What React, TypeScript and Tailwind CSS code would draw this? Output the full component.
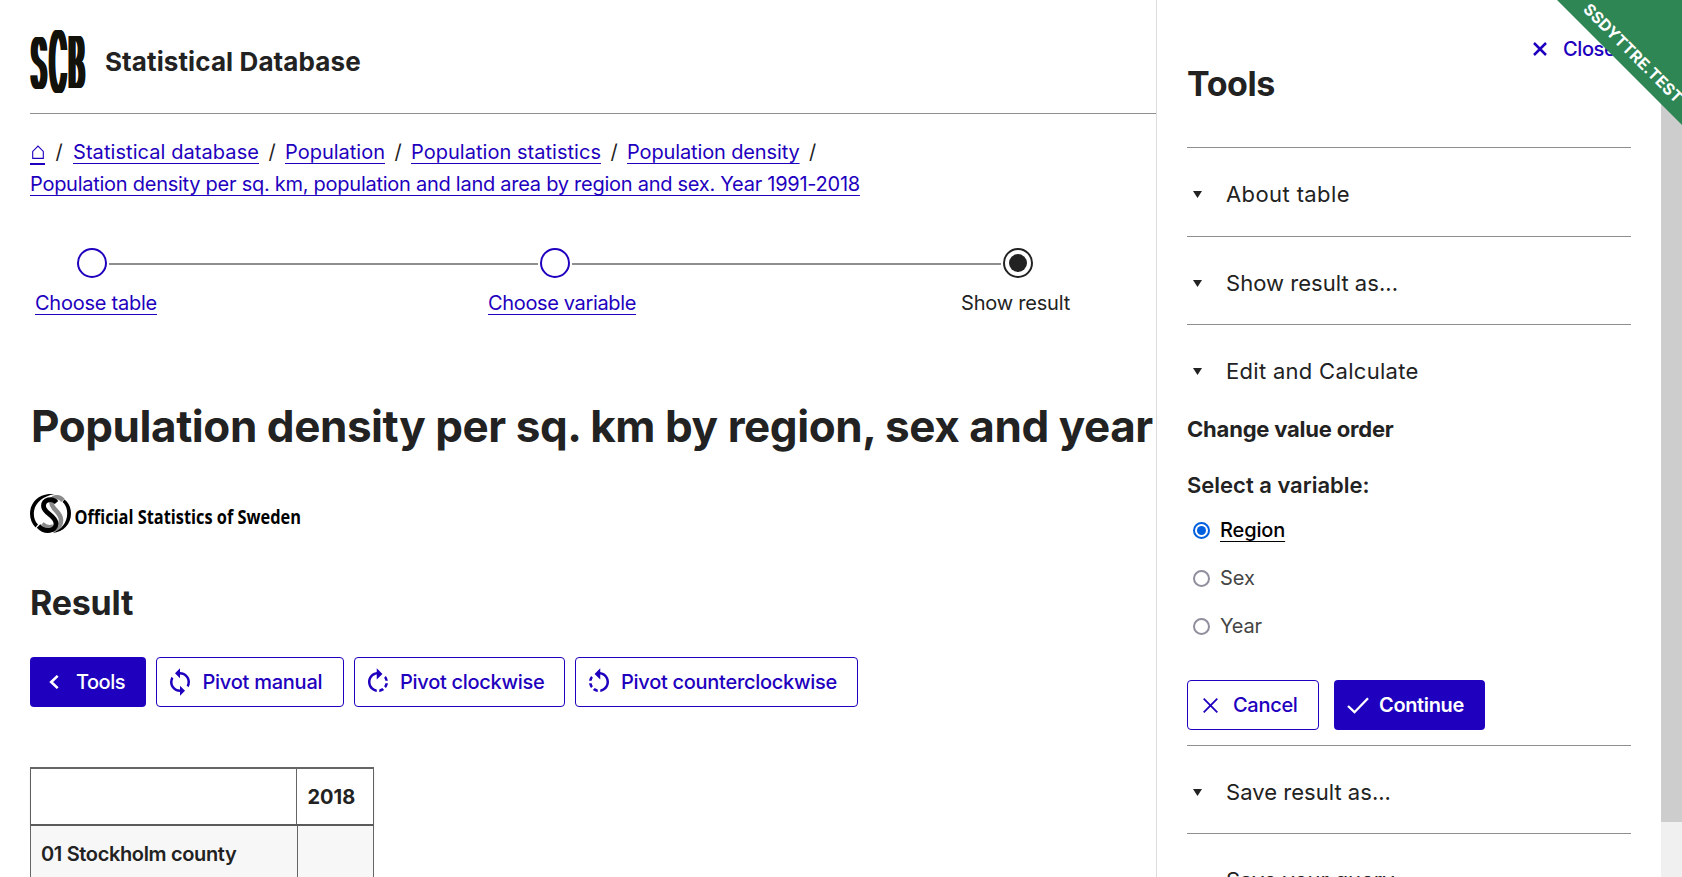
import React from "react";
import { MdSync, MdRotateRight, MdRotateLeft } from "react-icons/md";

const link = "underline decoration-1 underline-offset-[4px] text-[#1e00be]";

function ScbLogo() {
  const letter =
    "absolute left-0 top-0 block origin-top-left font-light text-[20px] leading-[24px] text-[#12120b] [text-shadow:0.7px_0,1.4px_0,2.1px_0,2.8px_0,3.5px_0,4.2px_0,4.6px_0]";
  return (
    <div className="relative h-[63px] w-[55px] shrink-0" aria-label="SCB">
      <span className={`${letter} [transform:translate(-1.2px,-8.6px)_scale(1.16,3.48)]`}>S</span>
      <span className={`${letter} [transform:translate(17.2px,-17.8px)_scale(1.12,4.2)]`}>C</span>
      <span className={`${letter} [transform:translate(36.3px,-9.6px)_scale(1.16,3.57)]`}>B</span>
    </div>
  );
}

function HomeIcon() {
  return (
    <span className="mt-[7px] flex h-[22px] w-[15px] shrink-0 justify-center border-b-2 border-[#1e00be]">
      <svg viewBox="0 0 12 15" className="mt-[2px] h-[15px] w-[12px]">
        <path d="M0.7 13.4V6.4L6 1l5.3 5.4v7z" fill="none" stroke="#1e00be" strokeWidth="1.1" />
      </svg>
    </span>
  );
}

function Slash({ className }: { className: string }) {
  return <span className={`shrink-0 text-center ${className}`}>/</span>;
}

function Circle() {
  return <div className="size-[30px] shrink-0 rounded-full border-[2.4px] border-[#1e00be] bg-white" />;
}

function StepLine() {
  return <div className="mx-[2px] mt-[2px] h-[2px] w-[429px] shrink-0 bg-[#8f8f8f]" />;
}

function OfficialStatistics() {
  return (
    <div className="flex h-[39px] items-start">
      <svg viewBox="0 0 41 39" className="h-[39px] w-[41px] shrink-0">
        <path d="M33 6.5C29 1.5 22 2.5 21.5 8.500C21 15 31 18 31 26C31 33 25 37 20 35" fill="none" stroke="#8a8a8a" strokeWidth="4.600" />
        <path d="M12.500 29.500C15 32 19 33.500 23 32" fill="none" stroke="#8a8a8a" strokeWidth="3.500" />
        <path d="M26.500 8.500C22 3.500 13.500 5.500 13.500 12C13.500 19.500 26 21.500 26 29.500C26 37.500 15 39 8.500 32" fill="none" stroke="#000" strokeWidth="4.800" />
        <path d="M24.500 0C10 -1.500 0 8 0 19.500C0 25 2 30 5.500 33.500L8 30.500C5 27.500 3.800 24 3.800 19.500C3.800 11 11 2.500 24.500 0Z" fill="#000" />
        <path d="M34.500 5.500C38.500 8.500 41 13.500 41 19.500C41 30 33.500 38 22.500 39C31.500 35.500 37.200 28.500 37.200 19.500C37.200 14.500 35.500 10.500 32.500 8Z" fill="#000" />
      </svg>
      <svg viewBox="0 0 230 39" className="ml-[3px] h-[39px] w-[230px] shrink-0 overflow-visible">
        <text
          x="0.500"
          y="29.600"
          textLength="226.500"
          lengthAdjust="spacingAndGlyphs"
          className="fill-black font-['Open_Sans',sans-serif] text-[20px] font-bold"
        >
          Official Statistics of Sweden
        </text>
      </svg>
    </div>
  );
}

function AccordionHeader({ label, className }: { label: string; className: string }) {
  return (
    <div className="flex h-[88px] shrink-0 items-center border-t border-[#8f8f8f] pt-[5px] pl-[6px]">
      <svg viewBox="0 0 9 7" className="mr-[24px] h-[7px] w-[9px]">
        <path d="M0 0h9L4.500 7z" fill="#222" />
      </svg>
      <span className={`text-[22px] leading-[28px] ${className}`}>{label}</span>
    </div>
  );
}

function Radio({ label, checked, className }: { label: string; checked?: boolean; className: string }) {
  return (
    <label className="flex h-[48px] items-center pl-[6px]">
      <span
        className={`flex size-[17px] items-center justify-center rounded-full border-2 ${
          checked ? "border-[#0060df]" : "border-[#8f8f9d]"
        }`}
      >
        {checked && <span className="size-[9px] rounded-full bg-[#0060df]" />}
      </span>
      <span className={`ml-[10px] leading-[24px] ${className}`}>{label}</span>
    </label>
  );
}

function MainContent() {
  return (
    <main className="flex h-[877px] w-[1156px] shrink-0 flex-col overflow-hidden pl-[30px]">
      <header className="flex h-[114px] shrink-0 items-start border-b border-[#8f8f8f] pt-[30px]">
        <ScbLogo />
        <div className="ml-[20px] flex h-[63px] items-center text-[26px] font-bold tracking-[0.1px]">
          Statistical Database
        </div>
      </header>

      <nav className="mt-[22px] shrink-0 leading-[32px]">
        <div className="flex">
          <HomeIcon />
          <Slash className="w-[28px]" />
          <a className={`${link} tracking-[0.07px]`}>Statistical database</a>
          <Slash className="w-[26px]" />
          <a className={link}>Population</a>
          <Slash className="w-[26px]" />
          <a className={`${link} tracking-[0.03px]`}>Population statistics</a>
          <Slash className="w-[26px]" />
          <a className={`${link} tracking-[-0.13px]`}>Population density</a>
          <Slash className="w-[26px]" />
        </div>
        <div>
          <a className={`${link} tracking-[-0.26px]`}>
            Population density per sq. km, population and land area by region and sex. Year 1991-2018
          </a>
        </div>
      </nav>

      <div className="mt-[48px] ml-[47px] flex h-[30px] shrink-0 items-center">
        <Circle />
        <StepLine />
        <Circle />
        <StepLine />
        <div className="flex size-[30px] shrink-0 items-center justify-center rounded-full border-2 border-[#222]">
          <div className="size-[18px] rounded-full bg-[#222]" />
        </div>
      </div>
      <div className="mt-[13px] flex h-[24px] shrink-0 pl-[5px] leading-[24px]">
        <div className="w-[453px]">
          <a className={`${link} tracking-[-0.24px]`}>Choose table</a>
        </div>
        <div className="w-[473px]">
          <a className={`${link} tracking-[-0.35px]`}>Choose variable</a>
        </div>
        <div className="tracking-[-0.2px]">Show result</div>
      </div>

      <h1 className="mt-[84px] h-[54px] shrink-0 pl-px text-[44px] leading-[54px] font-bold tracking-[-0.43px] whitespace-nowrap">
        Population density per sq. km by region, sex and year
      </h1>

      <div className="mt-[41px] shrink-0">
        <OfficialStatistics />
      </div>

      <h2 className="mt-[50px] h-[40px] shrink-0 text-[34px] leading-[40px] font-bold tracking-[-0.2px]">Result</h2>

      <div className="mt-[34px] flex h-[50px] shrink-0 gap-[10px] font-medium">
        <button className="flex w-[116px] items-center rounded bg-[#1e00be] text-white">
          <svg viewBox="0 0 10 14" className="ml-[19px] h-[14px] w-[10px]">
            <path d="M8.700 0.900L2.200 7l6.500 6.100" fill="none" stroke="#fff" strokeWidth="2.600" />
          </svg>
          <span className="ml-[17px] tracking-[-0.5px]">Tools</span>
        </button>
        <button className="flex w-[188px] items-center rounded border border-[#1e00be] text-[#1e00be]">
          <MdSync className="ml-[8px] size-[30px]" />
          <span className="ml-[7.5px] tracking-[-0.25px]">Pivot manual</span>
        </button>
        <button className="flex w-[211px] items-center rounded border border-[#1e00be] text-[#1e00be]">
          <MdRotateRight className="ml-[8px] size-[30px]" />
          <span className="ml-[7px] tracking-[-0.28px]">Pivot clockwise</span>
        </button>
        <button className="flex w-[283px] items-center rounded border border-[#1e00be] text-[#1e00be]">
          <MdRotateLeft className="ml-[8px] size-[30px]" />
          <span className="ml-[7px] tracking-[-0.28px]">Pivot counterclockwise</span>
        </button>
      </div>

      <div className="mt-[60px] flex h-[160px] w-[344px] shrink-0 flex-col border-x border-t-2 border-[#666]">
        <div className="flex h-[57px] shrink-0 border-b-2 border-[#5a5a5a] shadow-[0_2px_3px_rgba(0,0,0,0.18)]">
          <div className="w-[266px] border-r border-[#666]" />
          <div className="flex items-center pl-[10.5px] font-bold">2018</div>
        </div>
        <div className="flex grow bg-[#f7f7f7]">
          <div className="w-[267px] border-r border-[#666] pt-[16px] pl-[10px] leading-[24px] font-semibold tracking-[-0.35px]">
            01 Stockholm county
          </div>
        </div>
      </div>
    </main>
  );
}

function ToolsPanel() {
  return (
    <aside className="flex h-[877px] w-[505px] shrink-0 flex-col overflow-hidden border-l border-[#ddd] pr-[30px] pl-[30px]">
      <div className="mt-[37px] flex h-[24px] shrink-0 items-center pl-[346px] text-[#1e00be]">
        <svg viewBox="0 0 14 14" className="h-[14px] w-[14px]">
          <path d="M1 1l12 12M13 1L1 13" stroke="#1e00be" strokeWidth="2.500" />
        </svg>
        <span className="ml-[16px] leading-[24px] font-medium tracking-[-0.4px]">Close</span>
      </div>
      <h2 className="mt-[3px] mb-[43px] h-[40px] shrink-0 text-[34px] leading-[40px] font-bold tracking-[-0.4px]">Tools</h2>

      <div className="flex h-[89px] shrink-0 flex-col">
        <AccordionHeader label="About table" className="tracking-[0.4px]" />
      </div>
      <AccordionHeader label="Show result as..." className="tracking-[0.03px]" />
      <AccordionHeader label="Edit and Calculate" className="tracking-[0.3px]" />

      <h3 className="mt-[3px] h-[28px] shrink-0 text-[22px] leading-[28px] font-bold tracking-[-0.2px]">Change value order</h3>
      <h4 className="mt-[28px] h-[28px] shrink-0 text-[22px] leading-[28px] font-semibold">Select a variable:</h4>
      <div className="mt-[7px] shrink-0">
        <Radio
          label="Region"
          checked
          className="font-medium tracking-[-0.15px] text-black underline decoration-1 underline-offset-[4px]"
        />
        <Radio label="Sex" className="text-[#444]" />
        <Radio label="Year" className="tracking-[-0.2px] text-[#444]" />
      </div>
      <div className="mt-[30px] mb-[15px] flex h-[50px] shrink-0 gap-[15px]">
        <button className="flex w-[132px] items-center rounded border border-[#1e00be] font-medium text-[#1e00be]">
          <svg viewBox="0 0 15 15" className="ml-[15px] h-[15px] w-[15px]">
            <path d="M0.700 0.700l13.600 13.600M14.300 0.700L0.700 14.300" stroke="#1e00be" strokeWidth="1.800" />
          </svg>
          <span className="ml-[15px] tracking-[-0.3px]">Cancel</span>
        </button>
        <button className="flex w-[151px] items-center rounded bg-[#1e00be] font-semibold text-white">
          <svg viewBox="0 0 22 17" className="ml-[13px] h-[17px] w-[22px]">
            <path d="M1 9l6.500 6.200L21 1.200" fill="none" stroke="#fff" strokeWidth="2.300" />
          </svg>
          <span className="ml-[10px] tracking-[-0.35px]">Continue</span>
        </button>
      </div>
      <AccordionHeader label="Save result as..." className="tracking-[0.03px]" />
      <AccordionHeader label="Save your query" className="tracking-[-0.1px]" />
    </aside>
  );
}

export default function App() {
  return (
    <div className="relative flex h-[877px] w-[1682px] overflow-hidden bg-white font-['Inter',sans-serif] text-[20px] text-[#222]">
      <MainContent />
      <ToolsPanel />
      <div className="h-full w-[21px] shrink-0 bg-[#f0f0f0]">
        <div className="h-[822px] bg-[#cdcdcd]" />
      </div>
      <div className="absolute top-0 right-0 flex size-[125px] items-center justify-center overflow-hidden bg-[#2e8655] [clip-path:polygon(0_0,100%_0,100%_100%)]">
        <span className="translate-x-[14px] -translate-y-[10px] rotate-45 text-[16px] leading-[20px] font-bold tracking-[0.1px] text-white">
          SSDYTTRE.TEST
        </span>
      </div>
    </div>
  );
}
